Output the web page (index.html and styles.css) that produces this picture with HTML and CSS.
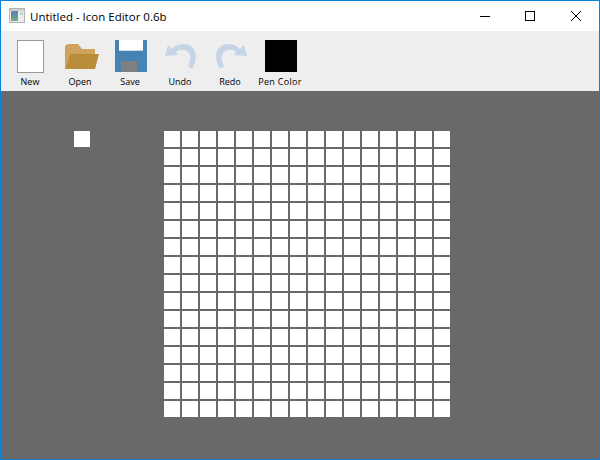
FILE: index.html
```html
<!DOCTYPE html>
<html lang="en">
<head>
  <meta charset="UTF-8">
  <title>Untitled - Icon Editor 0.6b</title>
  <link rel="stylesheet" href="styles.css">
</head>
<body>
  <div class="window">
    <div class="titlebar">
      <svg class="app-icon" width="16" height="16" viewBox="0 0 16 16">
        <rect x="0.500" y="0.500" width="15" height="14" fill="#ececec" stroke="#b4b4b4"/>
        <rect x="1" y="1" width="14" height="2" fill="#cfcfcf"/>
        <rect x="2" y="3" width="7" height="10" fill="#5a9a9e"/>
        <rect x="2" y="3" width="7" height="4" fill="#6288ae"/>
        <rect x="2" y="10" width="7" height="3" fill="#75a58c"/>
        <rect x="11" y="4" width="3" height="3" fill="#b9d6d1"/>
      </svg>
      <span class="title">Untitled - Icon Editor 0.6b</span>
      <div class="controls">
        <div class="control control-min">
          <svg width="10" height="10" viewBox="0 0 10 10"><path d="M0 5.500H10" stroke="#000" fill="none"/></svg>
        </div>
        <div class="control">
          <svg width="10" height="10" viewBox="0 0 10 10"><rect x="0.500" y="0.500" width="9" height="9" stroke="#000" fill="none"/></svg>
        </div>
        <div class="control">
          <svg width="10" height="10" viewBox="0 0 10 10"><path d="M0 0L10 10M10 0L0 10" stroke="#000" fill="none"/></svg>
        </div>
      </div>
    </div>

    <div class="toolbar">
      <div class="tool">
        <div class="tool-icon"><div class="page"></div></div>
        <span>New</span>
      </div>
      <div class="tool">
        <div class="tool-icon">
          <svg class="folder" width="34" height="25" viewBox="0 0 34 25">
            <path d="M0 4Q0 0 4 0H13L17 5H30V10H5L0 25Z" fill="#cfa35c"/>
            <path d="M5 10H34L30 25H0Z" fill="#bb8c3a"/>
          </svg>
        </div>
        <span>Open</span>
      </div>
      <div class="tool">
        <div class="tool-icon">
          <svg width="32" height="32" viewBox="0 0 32 32">
            <rect width="32" height="32" fill="#4682b4"/>
            <rect x="4" y="0" width="24" height="10" fill="#fff"/>
            <rect x="4" y="10" width="24" height="1" fill="#c8d8e6"/>
            <rect x="6" y="21" width="16" height="11" fill="#808080"/>
          </svg>
        </div>
        <span>Save</span>
      </div>
      <div class="tool">
        <div class="tool-icon">
          <svg width="32" height="32" viewBox="0 0 32 32">
            <path d="M3 5L7 9C13 3 23 2 28 8C32 13 32 21 27 29L23 26C26 20 26 15 23 12C19 9 14 9 11 12L13 15L0 16Z" fill="#c5d5e7"/>
          </svg>
        </div>
        <span>Undo</span>
      </div>
      <div class="tool">
        <div class="tool-icon">
          <svg width="32" height="32" viewBox="0 0 32 32">
            <path d="M29 5L25 9C19 3 9 2 4 8C0 13 0 21 5 29L9 26C6 20 6 15 9 12C13 9 18 9 21 12L19 15L32 16Z" fill="#c5d5e7"/>
          </svg>
        </div>
        <span>Redo</span>
      </div>
      <div class="tool">
        <div class="tool-icon"><div class="pen-color"></div></div>
        <span class="pen-label">Pen Color</span>
      </div>
    </div>

    <div class="workspace">
      <div class="preview"></div>
      <div class="grid">
        <i></i><i></i><i></i><i></i><i></i><i></i><i></i><i></i><i></i><i></i><i></i><i></i><i></i><i></i><i></i><i></i>
        <i></i><i></i><i></i><i></i><i></i><i></i><i></i><i></i><i></i><i></i><i></i><i></i><i></i><i></i><i></i><i></i>
        <i></i><i></i><i></i><i></i><i></i><i></i><i></i><i></i><i></i><i></i><i></i><i></i><i></i><i></i><i></i><i></i>
        <i></i><i></i><i></i><i></i><i></i><i></i><i></i><i></i><i></i><i></i><i></i><i></i><i></i><i></i><i></i><i></i>
        <i></i><i></i><i></i><i></i><i></i><i></i><i></i><i></i><i></i><i></i><i></i><i></i><i></i><i></i><i></i><i></i>
        <i></i><i></i><i></i><i></i><i></i><i></i><i></i><i></i><i></i><i></i><i></i><i></i><i></i><i></i><i></i><i></i>
        <i></i><i></i><i></i><i></i><i></i><i></i><i></i><i></i><i></i><i></i><i></i><i></i><i></i><i></i><i></i><i></i>
        <i></i><i></i><i></i><i></i><i></i><i></i><i></i><i></i><i></i><i></i><i></i><i></i><i></i><i></i><i></i><i></i>
        <i></i><i></i><i></i><i></i><i></i><i></i><i></i><i></i><i></i><i></i><i></i><i></i><i></i><i></i><i></i><i></i>
        <i></i><i></i><i></i><i></i><i></i><i></i><i></i><i></i><i></i><i></i><i></i><i></i><i></i><i></i><i></i><i></i>
        <i></i><i></i><i></i><i></i><i></i><i></i><i></i><i></i><i></i><i></i><i></i><i></i><i></i><i></i><i></i><i></i>
        <i></i><i></i><i></i><i></i><i></i><i></i><i></i><i></i><i></i><i></i><i></i><i></i><i></i><i></i><i></i><i></i>
        <i></i><i></i><i></i><i></i><i></i><i></i><i></i><i></i><i></i><i></i><i></i><i></i><i></i><i></i><i></i><i></i>
        <i></i><i></i><i></i><i></i><i></i><i></i><i></i><i></i><i></i><i></i><i></i><i></i><i></i><i></i><i></i><i></i>
        <i></i><i></i><i></i><i></i><i></i><i></i><i></i><i></i><i></i><i></i><i></i><i></i><i></i><i></i><i></i><i></i>
        <i></i><i></i><i></i><i></i><i></i><i></i><i></i><i></i><i></i><i></i><i></i><i></i><i></i><i></i><i></i><i></i>
      </div>
    </div>
  </div>
</body>
</html>
```

FILE: styles.css
```css
body {
  margin: 0;
  font-family: "Open Sans", "Noto Sans", sans-serif;
  color: #000;
}
.window {
  width: 600px;
  height: 460px;
  box-sizing: border-box;
  border: 1px solid #0a7fd9;
  display: flex;
  flex-direction: column;
  overflow: hidden;
}
.titlebar {
  height: 30px;
  flex: none;
  display: flex;
  align-items: center;
  background: #fff;
  padding-left: 8px;
}
.app-icon {
  flex: none;
  margin-right: 5px;
}
.title {
  font-size: 11.5px;
  white-space: nowrap;
}
.controls {
  margin-left: auto;
  display: flex;
}
.control {
  width: 46px;
  height: 30px;
  display: flex;
  align-items: center;
  justify-content: center;
}
.control-min {
  width: 44px;
}
.toolbar {
  height: 60px;
  flex: none;
  display: flex;
  background: #eeeeee;
  padding-left: 4px;
}
.tool {
  width: 50px;
  display: flex;
  flex-direction: column;
  align-items: center;
  font-size: 9px;
  white-space: nowrap;
}
.tool-icon {
  height: 33px;
  margin-top: 9px;
  margin-bottom: 2px;
  padding-left: 2px;
  display: flex;
  align-items: flex-start;
  justify-content: center;
}
.page {
  width: 25px;
  height: 31px;
  margin-right: 1px;
  background: #fff;
  border: 1px solid #999;
}
.folder {
  margin-left: 2px;
  margin-top: 4px;
}
.pen-color {
  width: 32px;
  height: 32px;
  background: #000;
}
.pen-label {
  letter-spacing: 0.3px;
}
.workspace {
  flex: 1;
  display: flex;
  align-items: flex-start;
  background: #696969;
  padding: 40px 0 0 73px;
}
.preview {
  width: 16px;
  height: 16px;
  background: #fff;
  margin-right: 74px;
}
.grid {
  display: grid;
  grid-template-columns: repeat(16, 16px);
  grid-auto-rows: 16px;
  gap: 2px;
}
.grid i {
  display: block;
  background: #fff;
}
```
